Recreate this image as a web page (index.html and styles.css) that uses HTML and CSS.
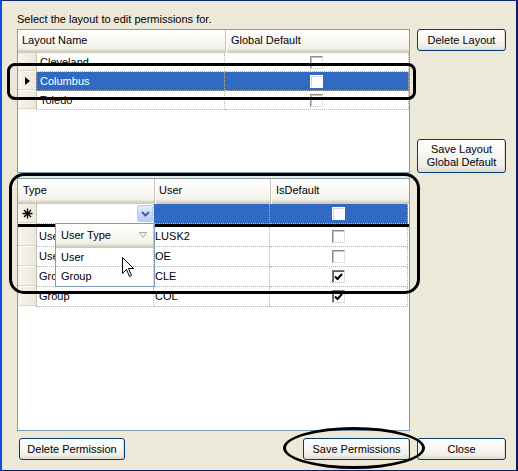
FILE: index.html
```html
<!DOCTYPE html>
<html>
<head>
<meta charset="utf-8">
<link rel="stylesheet" href="styles.css">
</head>
<body>
<div class="window">
  <div class="caption">Select the layout to edit permissions for.</div>
  <div class="upper">
    <div class="grid grid-top">
      <div class="hdr">
        <div class="hcell hc-name">Layout Name</div>
        <div class="hcell hc-global">Global Default</div>
      </div>
      <div class="row">
        <div class="rowhead"></div>
        <div class="cell c-name">Cleveland</div>
        <div class="cell c-global"><span class="chk"></span></div>
      </div>
      <div class="row selected">
        <div class="rowhead"><span class="current"></span></div>
        <div class="cell c-name">Columbus</div>
        <div class="cell c-global"><span class="chk"></span></div>
      </div>
      <div class="row">
        <div class="rowhead"></div>
        <div class="cell c-name">Toledo</div>
        <div class="cell c-global"><span class="chk"></span></div>
      </div>
    </div>
    <div class="side">
      <button class="btn btn-side">Delete Layout</button>
      <button class="btn btn-side btn-tall">Save Layout<br>Global Default</button>
    </div>
  </div>

  <div class="grid grid-bottom">
    <div class="hdr hdr-b">
      <div class="hcell hc-type">Type</div>
      <div class="hcell hc-user">User</div>
      <div class="hcell hc-def">IsDefault</div>
    </div>
    <div class="row row-b newrow">
      <div class="rowhead">
        <svg class="star" width="11" height="11" viewBox="0 0 11 11">
          <path d="M5.5 0.5V10.5M0.5 5.5H10.5M2 2L9 9M9 2L2 9" stroke="#000" stroke-width="1.3" fill="none"/>
        </svg>
      </div>
      <div class="cell c-type editing">
        <span class="combo-btn">
          <svg width="9" height="6" viewBox="0 0 9 6"><path d="M1 1L4.5 4.5L8 1" stroke="#4d6185" stroke-width="2" fill="none"/></svg>
        </span>
      </div>
      <div class="cell c-user sel"></div>
      <div class="cell c-def sel"><span class="chk chk-sel"></span></div>
    </div>
    <div class="row row-b">
      <div class="rowhead"></div>
      <div class="cell c-type"><span class="clip">User</span></div>
      <div class="cell c-user">LUSK2</div>
      <div class="cell c-def"><span class="chk"></span></div>
    </div>
    <div class="row row-b">
      <div class="rowhead"></div>
      <div class="cell c-type"><span class="clip">User</span></div>
      <div class="cell c-user">OE</div>
      <div class="cell c-def"><span class="chk"></span></div>
    </div>
    <div class="row row-b">
      <div class="rowhead"></div>
      <div class="cell c-type"><span class="clip">Group</span></div>
      <div class="cell c-user">CLE</div>
      <div class="cell c-def"><span class="chk checked"><svg width="9" height="8" viewBox="0 0 9 8"><path d="M1 3.5L3.5 6L8 1" stroke="#000" stroke-width="2" fill="none"/></svg></span></div>
    </div>
    <div class="row row-b">
      <div class="rowhead"></div>
      <div class="cell c-type">Group</div>
      <div class="cell c-user">COL</div>
      <div class="cell c-def"><span class="chk checked"><svg width="9" height="8" viewBox="0 0 9 8"><path d="M1 3.5L3.5 6L8 1" stroke="#000" stroke-width="2" fill="none"/></svg></span></div>
    </div>

    <div class="popup">
      <div class="popup-hdr">
        <span>User Type</span>
        <svg width="8" height="6" viewBox="0 0 8 6"><path d="M0.5 0.5H7.5L4 5.5Z" fill="none" stroke="#aca899" stroke-width="1"/></svg>
      </div>
      <div class="popup-item">User</div>
      <div class="popup-item">Group</div>
    </div>
  </div>

  <div class="actions">
    <div class="actions-left">
      <button class="btn btn-delperm">Delete Permission</button>
      <button class="btn btn-saveperm">Save Permissions</button>
    </div>
    <button class="btn btn-close">Close</button>
  </div>

  <div class="mark mark-layout"></div>
  <div class="mark mark-perm"></div>
  <div class="mark mark-save"></div>
  <svg class="cursor" width="13" height="21" viewBox="0 0 13 21">
    <path d="M0.5 0.5V16.5L4.5 12.5L7.5 19.5L9.5 18.5L6.5 11.5H11.5Z" fill="#fff" stroke="#000" stroke-width="1" stroke-linejoin="miter"/>
  </svg>
</div>
</body>
</html>
```

FILE: styles.css
```css
* { box-sizing: border-box; }

html, body {
  margin: 0;
  padding: 0;
  background: #ece9d8;
}

body {
  font-family: "Liberation Sans", Arial, sans-serif;
  font-size: 11px;
  color: #000;
}

.window {
  position: relative;
  width: 518px;
  height: 471px;
  background: #ece9d8;
  border-left: 2px solid #0b50dc;
  border-top: 1px solid #0a2a7a;
  border-right: 2px solid #0a1f5c;
  border-bottom: 1px solid #0a1f5c;
  padding-left: 15px;
  display: flex;
  flex-direction: column;
}

.caption {
  margin-top: 12px;
  height: 13px;
  line-height: 13px;
  margin-bottom: 3px;
  white-space: nowrap;
}

.upper {
  display: flex;
  gap: 7px;
  height: 144px;
}

.grid {
  position: relative;
  width: 393px;
  border: 1px solid #7f9db9;
  background: #fff;
}

.grid-top { height: 144px; }

.grid-bottom {
  margin-top: 5px;
  height: 253px;
}

/* header */
.hdr {
  display: flex;
  height: 23px;
  background: linear-gradient(to bottom, #ffffff 0px, #f7f6f1 14px, #f1efe6 19px, #e2decd 20px, #d8d4c4 21px, #cbc7b8 23px);
}

.hdr-b {
  height: 25px;
  background: linear-gradient(to bottom, #ffffff 0px, #f7f6f1 16px, #f1efe6 21px, #e2decd 22px, #d8d4c4 23px, #cbc7b8 25px);
}

.hcell {
  height: 100%;
  line-height: 21px;
  padding-left: 4px;
  white-space: nowrap;
  overflow: hidden;
}

.hdr-b .hcell {
  line-height: 23px;
}

.hc-name {
  width: 208px;
  border-right: 1px solid #c9c6b6;
}

.hc-global {
  width: 183px;
  padding-left: 5px;
  box-shadow: inset 1px 0 0 #ffffff;
}

.hc-type {
  width: 137px;
  padding-left: 5px;
  border-right: 1px solid #c9c6b6;
}

.hc-user {
  width: 116px;
  padding-left: 4px;
  border-right: 1px solid #c9c6b6;
  box-shadow: inset 1px 0 0 #ffffff;
}

.hc-def {
  width: 138px;
  padding-left: 5px;
  box-shadow: inset 1px 0 0 #ffffff;
}

/* rows */
.row {
  display: flex;
  height: 19px;
}

.row-b {
  height: 20px;
}

.rowhead {
  width: 19px;
  height: 100%;
  flex: none;
  display: flex;
  align-items: center;
  background: linear-gradient(to right, #f6f5ef, #ebe8da);
  border-right: 1px solid #d6d2c2;
  border-bottom: 1px solid #fbfaf6;
  box-shadow: inset 0 -1px 0 #dcd8c8;
}

.current {
  display: block;
  margin-left: 7px;
  width: 0;
  height: 0;
  border-left: 5px solid #000;
  border-top: 4px solid transparent;
  border-bottom: 4px solid transparent;
}

.cell {
  height: 100%;
  border-right: 1px dotted #b4b4b4;
  border-bottom: 1px dotted #b4b4b4;
  white-space: nowrap;
  overflow: hidden;
  line-height: 16px;
  padding-top: 1px;
}

.c-name {
  width: 189px;
  border-left: 1px dotted #b4b4b4;
  padding-left: 3px;
  margin-left: -1px;
}

.c-global {
  width: 184px;
  display: flex;
  justify-content: center;
  align-items: center;
  padding-top: 0;
}

.row.selected .cell {
  background: #316ac5;
  color: #fff;
}

.c-type {
  width: 118px;
  border-left: 1px dotted #b4b4b4;
  margin-left: -1px;
  padding-left: 2px;
  line-height: 18px;
  padding-top: 0;
}

/* the part of the value hidden under the drop-down list is clipped */
.clip {
  display: inline-block;
  width: 16px;
  overflow: hidden;
  vertical-align: top;
}

.c-user {
  width: 116px;
  padding-left: 1px;
  line-height: 18px;
  padding-top: 0;
}

.c-def {
  width: 138px;
  display: flex;
  justify-content: center;
  align-items: center;
  padding-top: 0;
}

.cell.sel {
  background: #316ac5;
}

.newrow {
  height: 23px;
  border-bottom: 3px solid #000;
}

.newrow .rowhead {
  padding-left: 4px;
}

.c-type.editing {
  display: flex;
  justify-content: flex-end;
  align-items: flex-start;
  padding: 1px 0 0 0;
}

.combo-btn {
  width: 16px;
  height: 17px;
  display: flex;
  align-items: center;
  justify-content: center;
  border: 1px solid #b9cbf6;
  border-radius: 2px;
  background: linear-gradient(to bottom, #e3ecfe, #c5d7fc 60%, #b4c9f7);
}

/* checkbox */
.chk {
  width: 13px;
  height: 13px;
  display: flex;
  align-items: center;
  justify-content: center;
  background: #fff;
  border: 1px solid;
  border-color: #8d8c86 #e3e1d6 #e3e1d6 #8d8c86;
  box-shadow: inset 1px 1px 0 #c8c6bc;
}

.chk.checked {
  border-color: #7a7973 #dedcd1 #dedcd1 #7a7973;
  box-shadow: inset 1px 1px 0 #5f5e59;
}

.row.selected .chk,
.chk-sel {
  border-color: #ffffff;
  box-shadow: inset 1px 1px 0 #d8d6cc;
}

/* popup */
.popup {
  position: absolute;
  left: 37px;
  top: 44px;
  width: 100px;
  height: 64px;
  border: 1px solid #7f9db9;
  background: #fff;
}

.popup-hdr {
  height: 24px;
  display: flex;
  align-items: center;
  justify-content: space-between;
  padding: 0 6px 2px 5px;
  background: linear-gradient(to bottom, #ffffff 0px, #f7f6f1 15px, #f1efe6 20px, #e2decd 21px, #d8d4c4 22px, #cbc7b8 24px);
  border-right: 1px solid #c9c6b6;
}

.popup-item {
  height: 19px;
  line-height: 18px;
  padding-left: 5px;
  border-bottom: 1px dotted #b4b4b4;
  border-right: 1px dotted #b4b4b4;
}

.popup-item:last-child {
  border-bottom: none;
}

/* buttons */
.btn {
  font-family: "Liberation Sans", Arial, sans-serif;
  font-size: 11px;
  color: #000;
  border: 1px solid #003c74;
  border-radius: 3px;
  background: linear-gradient(to bottom, #ffffff 0%, #f7f7f4 45%, #efeee8 80%, #dcdad0 100%);
  box-shadow: inset -1px -1px 0 #e0ddd0;
  padding: 0;
  margin: 0;
  line-height: 13px;
  text-align: center;
  cursor: default;
}

.side {
  width: 89px;
  display: flex;
  flex-direction: column;
  justify-content: space-between;
}

.btn-side {
  width: 89px;
  height: 22px;
}

.btn-tall {
  height: 34px;
}

.actions {
  margin-top: 7px;
  display: flex;
  gap: 7px;
  height: 22px;
}

.actions-left {
  width: 393px;
  display: flex;
  justify-content: space-between;
}

.btn-delperm {
  margin-left: 2px;
  width: 106px;
  height: 22px;
}

.btn-saveperm {
  width: 107px;
  height: 22px;
}

.btn-close {
  width: 89px;
  height: 22px;
}

/* annotation marks drawn over the dialog */
.mark {
  position: absolute;
  border: 3px solid #000;
  pointer-events: none;
}

.mark-layout {
  left: 5px;
  top: 62px;
  width: 409px;
  height: 37px;
  border-radius: 8px;
}

.mark-perm {
  left: 7px;
  top: 172px;
  width: 411px;
  height: 121px;
  border-radius: 15px;
}

.mark-save {
  left: 281px;
  top: 426px;
  width: 142px;
  height: 42px;
  border-radius: 50%;
}

.cursor {
  position: absolute;
  left: 120px;
  top: 256px;
}
```
